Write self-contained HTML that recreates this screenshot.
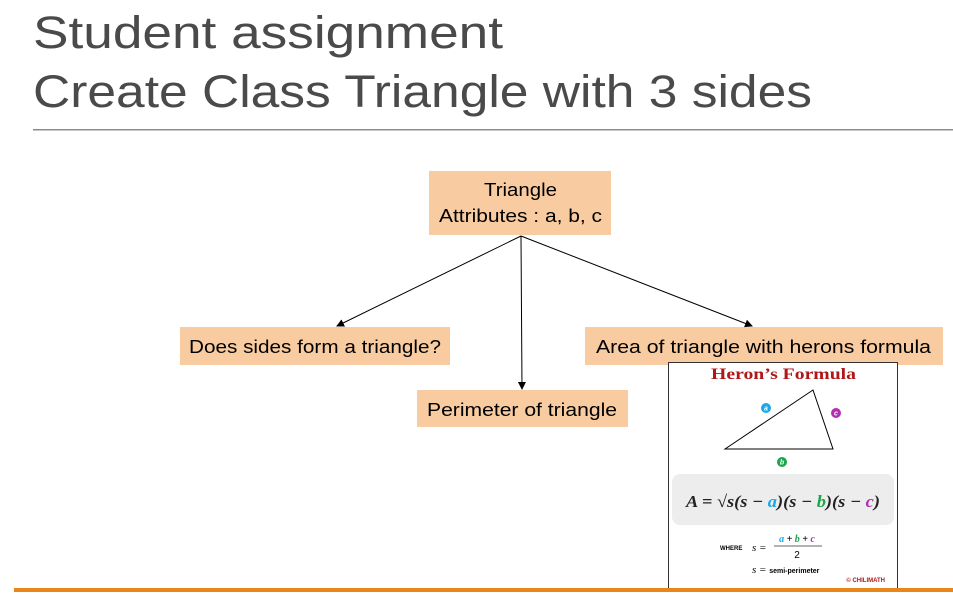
<!DOCTYPE html>
<html><head><style>body{margin:0;background:#fff}</style></head><body>
<svg width="953" height="593" xmlns="http://www.w3.org/2000/svg" font-family="Liberation Sans, sans-serif">
<defs><marker id="ar" markerWidth="8" markerHeight="8" refX="7" refY="4" orient="auto" markerUnits="userSpaceOnUse"><path d="M0,0L8,4L0,8z" fill="#000"/></marker></defs>
<rect width="953" height="593" fill="#fff"/>
<text x="33" y="48" font-size="45" fill="#4a4a4a" textLength="470" lengthAdjust="spacingAndGlyphs">Student assignment</text>
<text x="33" y="107" font-size="45" fill="#4a4a4a" textLength="779" lengthAdjust="spacingAndGlyphs">Create Class Triangle with 3 sides</text>
<rect x="33" y="129" width="920" height="1.5" fill="#8c8c8c"/>
<g fill="#f8cba0"><rect x="429" y="171" width="182" height="64"/><rect x="180" y="327" width="270" height="38"/><rect x="417" y="390" width="211" height="37"/><rect x="585" y="327" width="358" height="38"/></g>
<g font-size="18" fill="#000" lengthAdjust="spacingAndGlyphs">
<text x="484" y="196" textLength="73" lengthAdjust="spacingAndGlyphs">Triangle</text><text x="439" y="222" textLength="163" lengthAdjust="spacingAndGlyphs">Attributes : a, b, c</text>
<text x="189" y="353" textLength="252" lengthAdjust="spacingAndGlyphs">Does sides form a triangle?</text>
<text x="427" y="416" textLength="190" lengthAdjust="spacingAndGlyphs">Perimeter of triangle</text>
<text x="596" y="353" textLength="335" lengthAdjust="spacingAndGlyphs">Area of triangle with herons formula</text></g>
<g stroke="#000" stroke-width="1" marker-end="url(#ar)"><line x1="521" y1="236" x2="337" y2="326"/><line x1="521" y1="236" x2="522" y2="389"/><line x1="521" y1="236" x2="752" y2="326"/></g>
<rect x="668.5" y="362.5" width="229" height="227" fill="#fff" stroke="#333"/>
<text x="711" y="379" font-size="16" font-weight="bold" font-family="Liberation Serif, serif" fill="#b01818" textLength="145" lengthAdjust="spacingAndGlyphs">Heron’s Formula</text>
<path d="M725,449L813,390L833,449Z" fill="none" stroke="#000"/>
<g font-size="7" font-weight="bold" fill="#fff" text-anchor="middle" font-style="italic">
<circle cx="766" cy="408" r="5" fill="#1ba7e8"/><text x="766" y="410.5">a</text>
<circle cx="836" cy="413" r="5" fill="#b22fb2"/><text x="836" y="415.5">c</text>
<circle cx="782" cy="462" r="5" fill="#1aa64a"/><text x="782" y="464.5">b</text></g>
<rect x="672" y="474" width="222" height="51" rx="8" fill="#ededed"/>
<text x="686" y="507" font-size="17" font-style="italic" font-weight="bold" font-family="Liberation Serif, serif" fill="#222" textLength="194" lengthAdjust="spacingAndGlyphs">A = √s(s − <tspan fill="#1ba7e8">a</tspan>)(s − <tspan fill="#1aa64a">b</tspan>)(s − <tspan fill="#b22fb2">c</tspan>)</text>
<text x="720" y="550" font-size="6" font-weight="bold">WHERE</text>
<text x="752" y="551" font-size="11" font-style="italic" font-family="Liberation Serif, serif">s =</text>
<text x="797" y="542" font-size="10" font-style="italic" font-weight="bold" text-anchor="middle" font-family="Liberation Serif, serif"><tspan fill="#1ba7e8">a</tspan> + <tspan fill="#1aa64a">b</tspan> + <tspan fill="#b22fb2">c</tspan></text>
<line x1="774" y1="546" x2="822" y2="546" stroke="#333" stroke-width="0.7"/>
<text x="797" y="558" font-size="10" text-anchor="middle">2</text>
<text x="752" y="573" font-size="11" font-style="italic" font-family="Liberation Serif, serif">s = <tspan font-style="normal" font-family="Liberation Sans" font-size="7" font-weight="bold">semi-perimeter</tspan></text>
<text x="885" y="582" font-size="6" font-weight="bold" fill="#b01818" text-anchor="end">© CHILIMATH</text>
<rect x="14" y="588" width="939" height="4" fill="#e8861a"/>
</svg>
</body></html>
